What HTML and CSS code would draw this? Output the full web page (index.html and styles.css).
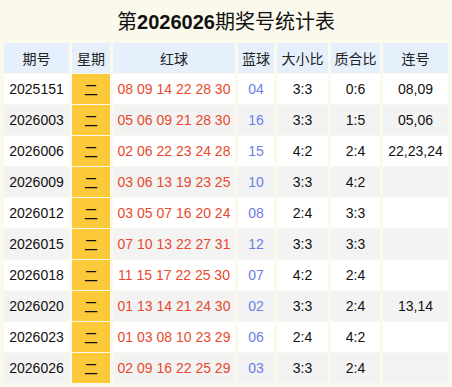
FILE: index.html
```html
<!DOCTYPE html>
<html lang="zh">
<head>
<meta charset="utf-8">
<link rel="stylesheet" href="styles.css">
</head>
<body>
<div class="page">
  <h1 class="title">第<b>2026026</b>期奖号统计表</h1>
  <table class="stats">
    <colgroup>
      <col class="c-issue"><col class="c-week"><col class="c-red"><col class="c-blue"><col class="c-size"><col class="c-prime"><col class="c-cons">
    </colgroup>
    <thead>
      <tr><th>期号</th><th>星期</th><th>红球</th><th>蓝球</th><th>大小比</th><th>质合比</th><th>连号</th></tr>
    </thead>
    <tbody>
      <tr><td>2025151</td><td class="week">二</td><td class="red">08 09 14 22 28 30</td><td class="blue">04</td><td>3:3</td><td>0:6</td><td>08,09</td></tr>
      <tr><td>2026003</td><td class="week">二</td><td class="red">05 06 09 21 28 30</td><td class="blue">16</td><td>3:3</td><td>1:5</td><td>05,06</td></tr>
      <tr><td>2026006</td><td class="week">二</td><td class="red">02 06 22 23 24 28</td><td class="blue">15</td><td>4:2</td><td>2:4</td><td>22,23,24</td></tr>
      <tr><td>2026009</td><td class="week">二</td><td class="red">03 06 13 19 23 25</td><td class="blue">10</td><td>3:3</td><td>4:2</td><td></td></tr>
      <tr><td>2026012</td><td class="week">二</td><td class="red">03 05 07 16 20 24</td><td class="blue">08</td><td>2:4</td><td>3:3</td><td></td></tr>
      <tr><td>2026015</td><td class="week">二</td><td class="red">07 10 13 22 27 31</td><td class="blue">12</td><td>3:3</td><td>3:3</td><td></td></tr>
      <tr><td>2026018</td><td class="week">二</td><td class="red">11 15 17 22 25 30</td><td class="blue">07</td><td>4:2</td><td>2:4</td><td></td></tr>
      <tr><td>2026020</td><td class="week">二</td><td class="red">01 13 14 21 24 30</td><td class="blue">02</td><td>3:3</td><td>2:4</td><td>13,14</td></tr>
      <tr><td>2026023</td><td class="week">二</td><td class="red">01 03 08 10 23 29</td><td class="blue">06</td><td>2:4</td><td>4:2</td><td></td></tr>
      <tr><td>2026026</td><td class="week">二</td><td class="red">02 09 16 22 25 29</td><td class="blue">03</td><td>3:3</td><td>2:4</td><td></td></tr>
    </tbody>
  </table>
</div>
</body>
</html>
```

FILE: styles.css
```css
html, body {
  margin: 0;
  padding: 0;
  background: #fbf9ec;
}
body {
  font-family: "Liberation Sans", Arial, "Noto Sans CJK SC", sans-serif;
  color: #111;
}
.page {
  width: 452px;
  height: 387px;
  padding: 0 1px;
  box-sizing: border-box;
  overflow: hidden;
}
.title {
  margin: 0;
  height: 42px;
  line-height: 45px;
  font-size: 20px;
  font-weight: normal;
  text-align: center;
  color: #111;
}
.title b {
  font-weight: bold;
}
.stats {
  border-collapse: separate;
  border-spacing: 3px 1px;
  table-layout: fixed;
  width: 450px;
  font-size: 14px;
}
.c-issue { width: 65px; }
.c-week { width: 38px; }
.c-red { width: 122px; }
.c-blue { width: 36px; }
.c-size { width: 51px; }
.c-prime { width: 49px; }
.c-cons { width: 65px; }
.stats th, .stats td {
  height: 30px;
  padding: 0;
  text-align: center;
  vertical-align: middle;
  white-space: nowrap;
  overflow: hidden;
}
.stats th {
  background: #e6f0fc;
  font-weight: normal;
  color: #222;
}
.stats tbody tr:nth-child(odd) td { background: #ffffff; }
.stats tbody tr:nth-child(even) td { background: #f3f3f3; }
.stats tbody tr td.week { background: #fcc93a; }
.stats td.red { color: #e8492c; }
.stats td.blue { color: #6b7de6; }
```
